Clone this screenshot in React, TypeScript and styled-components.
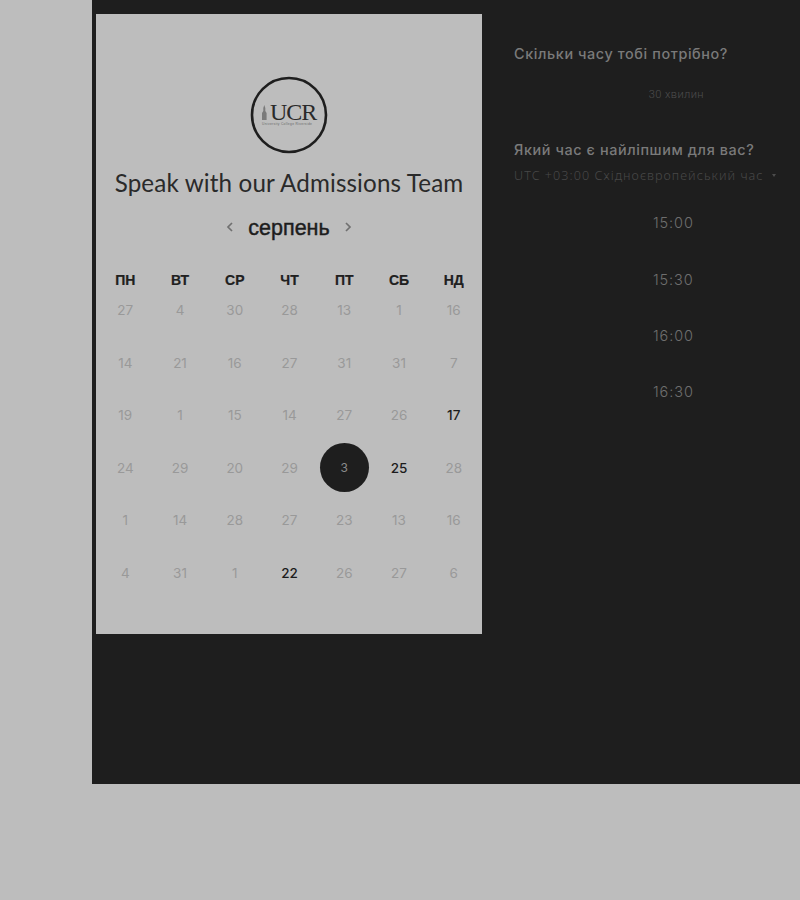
import React from "react";
import styled, { createGlobalStyle } from "styled-components";

const Global = createGlobalStyle`
  html, body { margin: 0; padding: 0; background: #bdbdbd; overflow: hidden; }
  body { width: 800px; height: 900px; font-family: "Liberation Sans", sans-serif; }
`;
const Page = styled.div`
  width: 800px; height: 900px; padding-left: 92px; box-sizing: border-box; overflow: hidden;
`;
const Panel = styled.main`
  width: 708px; height: 784px; background: #1e1e1e; display: flex; align-items: flex-start;
  padding: 14px 0 0 4px; box-sizing: border-box;
`;
const Card = styled.section`
  width: 386px; height: 620px; flex: none; background: #bdbdbd; display: flex; flex-direction: column;
  align-items: center; padding-top: 62px; box-sizing: border-box;
`;
const Logo = styled.svg`
  width: 78px; height: 78px; display: block; flex: none;
`;
const Title = styled.h1`
  margin: 13px 0 0; font: 400 24.2px/32px Lato, sans-serif; letter-spacing: 0.14px; color: #2a2a2a; white-space: nowrap;
`;
const MonthRow = styled.div`
  margin-top: 13px; height: 32px; display: flex; align-items: center; justify-content: center; gap: 12px;
`;
const Month = styled.h2`
  margin: 0; font: 400 21.5px/32px "Liberation Sans", sans-serif; color: #1d1d1d; -webkit-text-stroke: 0.45px #1d1d1d;
`;
const Arrow = styled.svg`
  width: 12px; height: 14px; display: block;
`;
const WeekHead = styled.div`
  display: grid; width: 383.25px; margin-top: 26px; margin-left: 1px;
  grid-template-columns: repeat(7, 54.75px); height: 14px;
`;
const Weekday = styled.span`
  text-align: center; font: 700 14px/20px "Liberation Sans", sans-serif; color: #202020; -webkit-text-stroke: 0.2px #202020;
`;
const Grid = styled.div`
  width: 383.25px; margin-left: 1px; display: grid;
  grid-template-columns: repeat(7, 54.75px); grid-auto-rows: 52.5px;
`;
const Day = styled.span<{ $on?: boolean }>`
  display: flex; align-items: center; justify-content: center; height: 52.5px;
  font: ${p => (p.$on ? 550 : 400)} 13.5px/20px Inter, sans-serif; color: ${p => (p.$on ? "#1c1c1c" : "#999999")};
`;
const Selected = styled.span`
  width: 49px; height: 49px; flex: none; border-radius: 50%; background: #1e1e1e; color: #8a8a8a;
  display: flex; align-items: center; justify-content: center; font: 400 12px/16px Inter, sans-serif;
`;
const Side = styled.aside`
  margin-left: 32px; margin-top: 29px; width: 276px; flex: none; display: flex; flex-direction: column;
`;
const Question = styled.h3`
  margin: 0; font: 500 14.4px/22px Inter, sans-serif; color: #7a7a7a; letter-spacing: 0.6px; white-space: nowrap;
`;
const DurationRow = styled.div`
  height: 56px; display: flex; justify-content: flex-end; align-items: center; padding-right: 86px; margin-top: 2px;
`;
const Duration = styled.span`
  font: 300 11.1px/16px Roboto, sans-serif; color: #4e4e4e; letter-spacing: 0.4px; white-space: nowrap;
`;
const Section = styled.div`
  margin-top: 16px;
`;
const Zone = styled.div`
  margin-top: 4px; display: flex; align-items: center; gap: 6px; height: 21px;
  font: 300 12.6px/21px "Noto Sans", sans-serif; color: #484848; letter-spacing: 1.05px; white-space: nowrap;
`;
const Caret = styled.span`
  width: 0; height: 0; border-left: 2.5px solid transparent; border-right: 2.5px solid transparent;
  border-top: 3px solid #4c4c4c; margin-left: 2px;
`;
const Slots = styled.div`
  margin-top: 9px; display: flex; flex-direction: column;
`;
const Slot = styled.div`
  height: 56.4px; display: flex; align-items: center; padding-left: 139px; box-sizing: border-box;
  font: 300 14.5px/20px Inter, sans-serif; color: #6e6e6e; letter-spacing: 0.9px;
`;

const weekdays = ["ПН", "ВТ", "СР", "ЧТ", "ПТ", "СБ", "НД"];
const days: (number | string)[] = [
  27, 4, 30, 28, 13, 1, 16,
  14, 21, 16, 27, 31, 31, 7,
  19, 1, 15, 14, 27, 26, "17*",
  24, 29, 20, 29, "s3", "25*", 28,
  1, 14, 28, 27, 23, 13, 16,
  4, 31, 1, "22*", 26, 27, 6,
];

export default function App() {
  return (
    <Page>
      <Global />
      <Panel>
        <Card>
          <Logo viewBox="0 0 78 78" aria-label="UCR">
            <circle cx="39" cy="39" r="37" fill="none" stroke="#1e1e1e" strokeWidth="2.6" />
            <path d="M12 44v-7l1.300-2v-3l1-3 1 3v3l1.300 2v7z" fill="#7a7a7a" />
            <text x="20" y="44" fontFamily="Liberation Serif, serif" fontSize="24" letterSpacing="-1" fill="#2a2a2a">UCR</text>
            <text x="12" y="48.500" fontFamily="Liberation Sans, sans-serif" fontSize="3.300" letterSpacing="0.32" fill="#6a6a6a">University College Riverside</text>
          </Logo>
          <Title>Speak with our Admissions Team</Title>
          <MonthRow>
            <Arrow viewBox="0 0 12 14"><path d="M8 2 4 6l4 4" fill="none" stroke="#707070" strokeWidth="1.700" /></Arrow>
            <Month>серпень</Month>
            <Arrow viewBox="0 0 12 14"><path d="m4 2 4 4-4 4" fill="none" stroke="#707070" strokeWidth="1.700" /></Arrow>
          </MonthRow>
          <WeekHead>
            {weekdays.map(w => <Weekday key={w}>{w}</Weekday>)}
          </WeekHead>
          <Grid>
            {days.map((d, i) => {
              const s = String(d);
              if (s.startsWith("s")) return <Day key={i}><Selected>{s.slice(1)}</Selected></Day>;
              return <Day key={i} $on={s.endsWith("*")}>{s.replace("*", "")}</Day>;
            })}
          </Grid>
        </Card>
        <Side>
          <Question>Скільки часу тобі потрібно?</Question>
          <DurationRow><Duration>30 хвилин</Duration></DurationRow>
          <Section>
            <Question>Який час є найліпшим для вас?</Question>
            <Zone>UTC +03:00 Східноєвропейський час <Caret /></Zone>
          </Section>
          <Slots>
            {["15:00", "15:30", "16:00", "16:30"].map(t => <Slot key={t}>{t}</Slot>)}
          </Slots>
        </Side>
      </Panel>
    </Page>
  );
}
